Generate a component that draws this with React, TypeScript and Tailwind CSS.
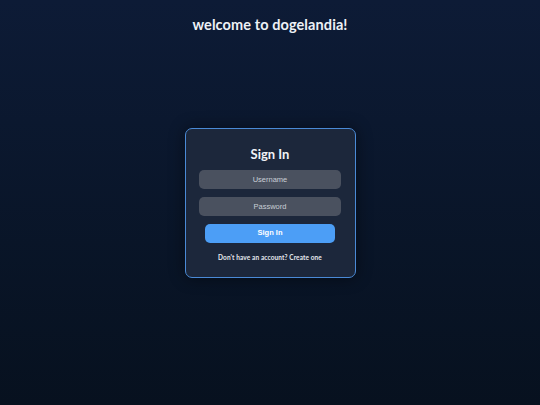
export default function App() {
  return (
    <div
      className="grid h-[405px] w-full grid-rows-[1fr_auto_1fr] bg-gradient-to-b from-[#0d1b36] to-[#07111f] text-white"
      style={{ fontFamily: 'Lato, "Noto Sans", sans-serif' }}
    >
      <header className="flex justify-center pt-[14px]">
        <h1 className="text-[14.5px] font-bold leading-[22px] tracking-[0.1px] text-[#eef1f6]">
          welcome to dogelandia!
        </h1>
      </header>

      <div className="flex justify-center">
        <form
          className="flex w-[171px] flex-col items-center rounded-[7px] border border-[#4a8ad6] bg-[#1c273b] pt-[16px] pb-[15px] shadow-[0_0_16px_rgba(0,0,0,0.45)]"
          onSubmit={(e) => e.preventDefault()}
        >
          <h2 className="text-[13px] font-bold leading-[18px] text-[#f1f3f7]">Sign In</h2>

          <input
            type="text"
            placeholder="Username"
            className="mt-[7px] h-[19px] w-[142px] rounded-[5px] bg-[#4a515f] text-center text-[7.5px] text-[#e3e6eb] outline-none placeholder:text-[#c9ced6]"
            style={{ fontFamily: '"Liberation Sans", Arial, sans-serif' }}
          />
          <input
            type="password"
            placeholder="Password"
            className="mt-[8px] h-[19px] w-[142px] rounded-[5px] bg-[#4a515f] text-center text-[7.5px] text-[#e3e6eb] outline-none placeholder:text-[#c9ced6]"
            style={{ fontFamily: '"Liberation Sans", Arial, sans-serif' }}
          />

          <button
            type="submit"
            className="mt-[8px] h-[19px] w-[130px] rounded-[5px] bg-[#4c9ef6] text-[7.5px] font-bold text-white"
            style={{ fontFamily: '"Liberation Sans", Arial, sans-serif' }}
          >
            Sign In
          </button>

          <p className="mt-[10px] text-[6.5px] font-bold leading-[9px] tracking-[0.1px] text-[#e6e9ee]">
            Don&apos;t have an account? Create one
          </p>
        </form>
      </div>

      <div />
    </div>
  );
}
